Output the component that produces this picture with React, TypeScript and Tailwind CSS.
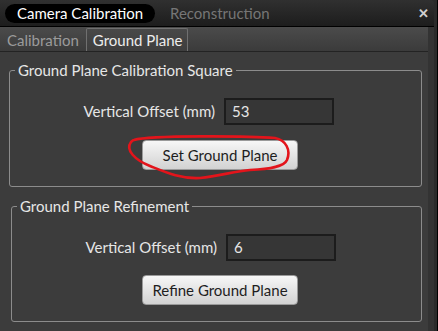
import React from 'react'

const font = { fontFamily: 'Lato, "Noto Sans", sans-serif' }

function GroupBox({ title, className, children }: { title: string; className?: string; children: React.ReactNode }) {
  return (
    <fieldset className={`border border-[#8c8c8c] rounded-[3px] px-3 ${className ?? ''}`}>
      <legend className="-ml-[7px] px-[3px] text-[15px] leading-[18px] text-[#e6e6e6]">{title}</legend>
      {children}
    </fieldset>
  )
}

function OffsetRow({ value }: { value: string }) {
  return (
    <div className="flex items-center">
      <span className="w-[193px] text-right text-[15px] text-[#e6e6e6] whitespace-nowrap">Vertical Offset (mm)</span>
      <div className="ml-[9px] w-[110px] h-[27px] bg-[#363636] border-2 border-[#1c1c1c] flex items-center pl-[6px] text-[15px] text-[#e6e6e6]">
        {value}
      </div>
    </div>
  )
}

function Btn({ label }: { label: string }) {
  return (
    <button className="w-[156px] h-[30px] rounded-[4px] border border-[#9a9a9a] bg-gradient-to-b from-[#f7f7f7] to-[#d2d2d2] text-[15px] text-[#1e1e1e] whitespace-nowrap">
      {label}
    </button>
  )
}

export default function App() {
  return (
    <div className="w-[438px] h-[331px] bg-[#2b2b2b] flex overflow-hidden select-none" style={font}>
      <div className="w-[434px] flex flex-col">
        {/* title bar */}
        <div className="h-[27px] shrink-0 flex items-center rounded-tr-[4px] bg-gradient-to-b from-[#303030] to-[#1d1d1d] border-b border-black pl-[5px] pr-[5px]">
          <div className="h-[19px] w-[150px] rounded-full bg-black flex items-center pl-[12px] text-[15px] text-white whitespace-nowrap">
            Camera Calibration
          </div>
          <span className="ml-[15px] text-[15px] text-[#767676]">Reconstruction</span>
          <span className="ml-auto text-[#d0d0d0] text-[13px] font-bold leading-none">✕</span>
        </div>
        <div className="flex flex-1">
          <div className="w-[428px] flex flex-col bg-[#3c3c3c]">
            {/* tabs */}
            <div className="h-[25px] shrink-0 flex items-end bg-gradient-to-b from-[#4b4b4b] to-[#3b3b3b] border-b border-[#232323] pl-[2px]">
              <div className="h-[22px] px-[5px] flex items-center text-[15px] text-[#9b9b9b]">Calibration</div>
              <div className="ml-[2px] h-[23px] w-[102px] px-[6px] flex items-center border border-b-0 border-[#707070] rounded-t-[2px] bg-gradient-to-b from-[#484848] to-[#3e3e3e] text-[15px] text-[#ececec] whitespace-nowrap">
                Ground Plane
              </div>
            </div>
            <div className="flex flex-col pl-[9px] pr-[6px] pt-[9px]">
              <div className="relative">
                <GroupBox title="Ground Plane Calibration Square" className="h-[126px] pt-[19px]">
                  <OffsetRow value="53" />
                  <div className="mt-[15px] pl-[120px]">
                    <Btn label="Set Ground Plane" />
                  </div>
                </GroupBox>
                {/* hand-drawn red annotation */}
                <svg className="absolute left-[111px] top-[69px] pointer-events-none" width="180" height="55" viewBox="0 0 180 55">
                  <path
                    d="M14 10 C30 5 130 6 155 8 C166 10 171 20 167 30 C164 37 150 39 130 40 C115 41 100 46 80 48 C60 49 45 42 30 36 C15 30 5 20 11 12 C12 11 13 10 14 10 Z"
                    fill="none"
                    stroke="#e3141b"
                    strokeWidth="2.6"
                    strokeLinejoin="round"
                  />
                </svg>
              </div>
              <GroupBox title="Ground Plane Refinement" className="mt-[10px] ml-[2px] h-[125px] pt-[19px]">
                <OffsetRow value="6" />
                <div className="mt-[14px] pl-[118px]">
                  <Btn label="Refine Ground Plane" />
                </div>
              </GroupBox>
            </div>
          </div>
          <div className="w-[6px] bg-[#333333]" />
        </div>
      </div>
      <div className="w-[4px] bg-[#2a2a2a] border-r border-black" />
    </div>
  )
}
